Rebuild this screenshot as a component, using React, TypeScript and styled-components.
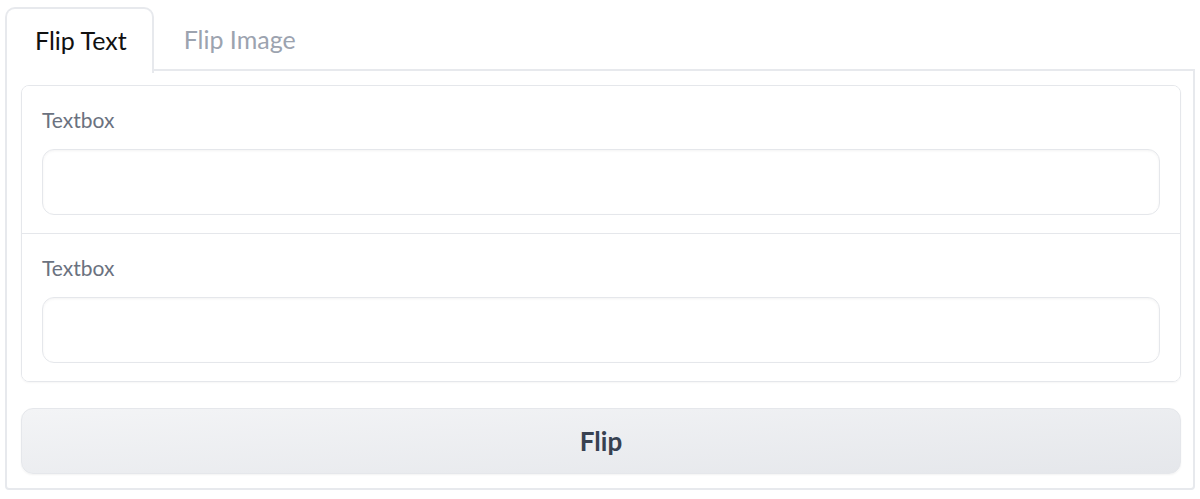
import React from "react";
import styled, { createGlobalStyle } from "styled-components";

const GlobalStyle = createGlobalStyle`
  html, body {
    margin: 0;
    padding: 0;
    background: #ffffff;
  }
  body {
    font-family: Lato, "Noto Sans", "Liberation Sans", sans-serif;
    -webkit-font-smoothing: antialiased;
  }
  * { box-sizing: border-box; }
`;

const Page = styled.div`
  padding: 7px 5px 0 5px;
  width: 1200px;
`;

const TabNav = styled.div`
  display: flex;
  align-items: flex-start;
  height: 64px;
  position: relative;
  z-index: 1;
`;

const Tab = styled.button<{ $selected?: boolean }>`
  display: flex;
  align-items: center;
  height: ${(p) => (p.$selected ? "66px" : "64px")};
  padding: 0 25px 3px 28px;
  margin: 0;
  font-family: inherit;
  font-size: 25px;
  line-height: 30px;
  background: ${(p) => (p.$selected ? "#ffffff" : "transparent")};
  color: ${(p) => (p.$selected ? "#111111" : "#9ca3af")};
  border: 2px solid ${(p) => (p.$selected ? "#e7e9ed" : "transparent")};
  border-bottom: none;
  border-radius: 10px 10px 0 0;
  cursor: pointer;
  & + & {
    padding-left: 28px;
  }
`;

const Panel = styled.div`
  margin-top: -2px;
  border: 2px solid #e7e9ed;
  border-radius: 0 0 4px 4px;
  padding: 14px 12px 14px 14px;
  display: flex;
  flex-direction: column;
  gap: 26px;
  width: 1190px;
`;

const Form = styled.div`
  border: 1px solid #e5e7eb;
  border-radius: 8px;
  overflow: hidden;
  display: flex;
  flex-direction: column;
  box-shadow: 0 1px 2px rgba(0, 0, 0, 0.04);
  width: 1160px;
`;

const Block = styled.div`
  display: flex;
  flex-direction: column;
  gap: 15px;
  padding: 20px 20px 18px 20px;
  background: #ffffff;
  & + & {
    border-top: 1px solid #e5e7eb;
  }
`;

const Label = styled.label`
  font-size: 21px;
  line-height: 28px;
  color: #6b7280;
`;

const Input = styled.textarea`
  display: block;
  width: 100%;
  height: 66px;
  resize: none;
  border: 1px solid #e5e7eb;
  border-radius: 12px;
  background: #ffffff;
  box-shadow: inset 0 1px 3px rgba(0, 0, 0, 0.05);
  font-family: inherit;
  font-size: 20px;
  padding: 14px 16px;
  outline: none;
`;

const Button = styled.button`
  height: 66px;
  width: 1160px;
  border: 1px solid #e5e7eb;
  border-radius: 12px;
  background: linear-gradient(to bottom right, #f3f4f6, #e5e7eb);
  box-shadow: 0 1px 2px rgba(0, 0, 0, 0.05);
  font-family: inherit;
  font-size: 26px;
  font-weight: 700;
  color: #374151;
  cursor: pointer;
`;

export default function App() {
  return (
    <>
      <GlobalStyle />
      <Page>
        <TabNav>
          <Tab $selected>Flip Text</Tab>
          <Tab>Flip Image</Tab>
        </TabNav>
        <Panel>
          <Form>
            <Block>
              <Label>Textbox</Label>
              <Input rows={1} />
            </Block>
            <Block>
              <Label>Textbox</Label>
              <Input rows={1} />
            </Block>
          </Form>
          <Button>Flip</Button>
        </Panel>
      </Page>
    </>
  );
}
